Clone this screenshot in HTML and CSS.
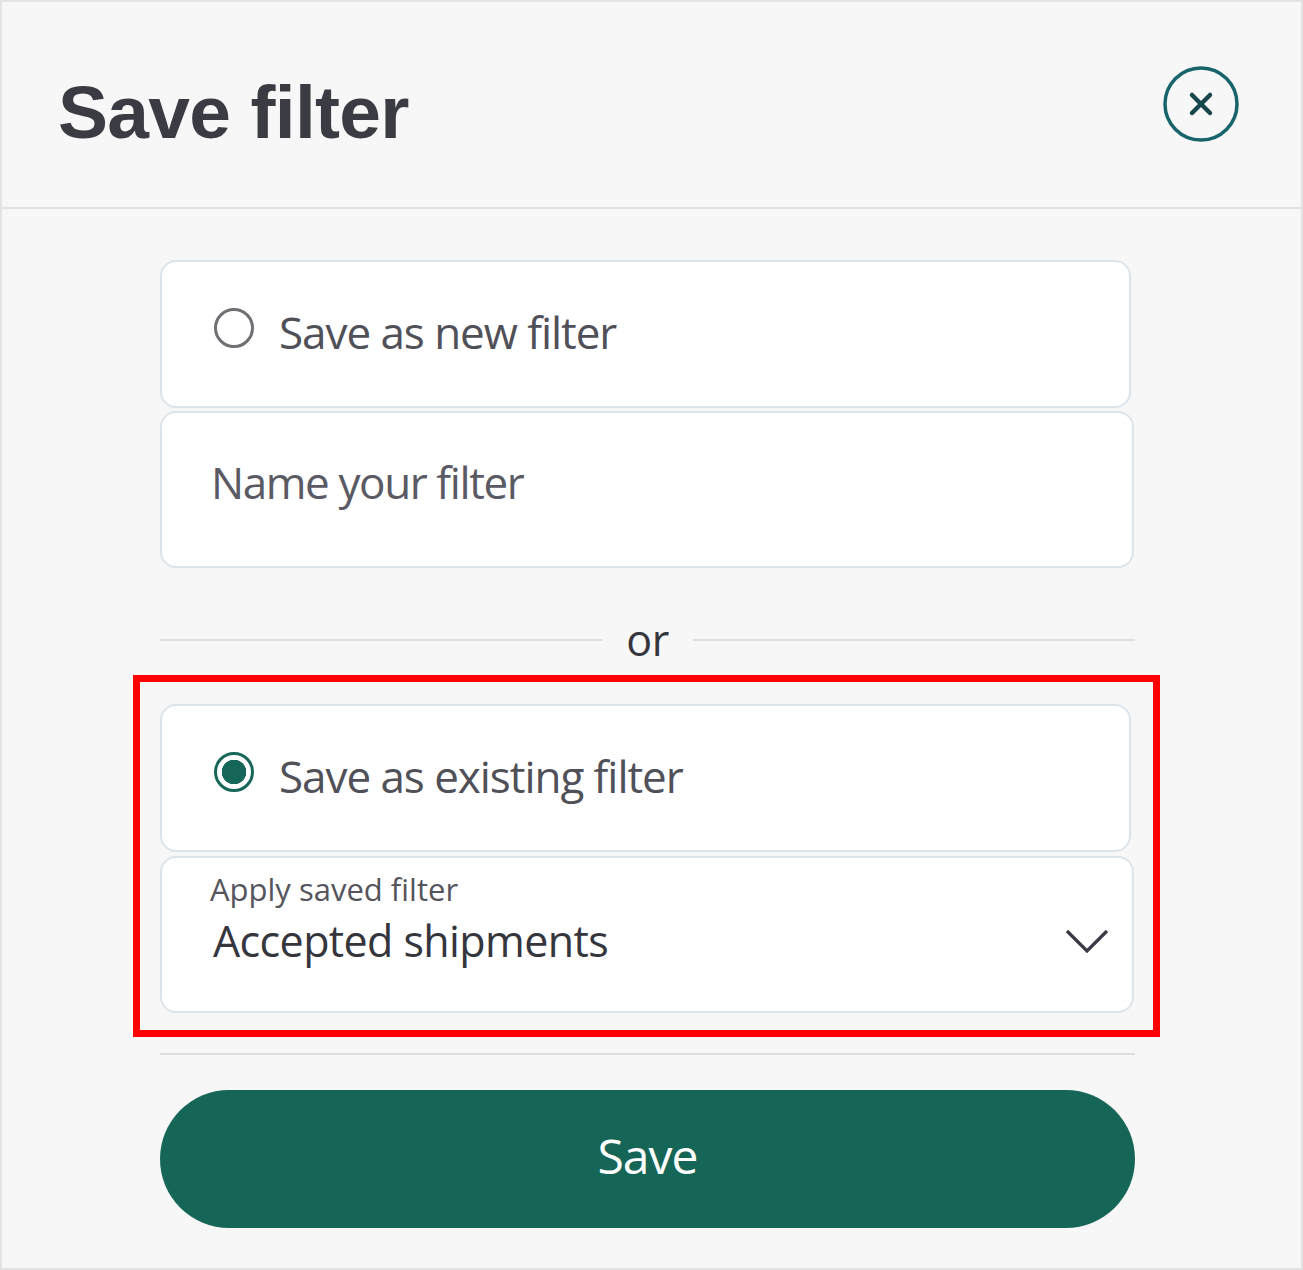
FILE: index.html
```html
<!DOCTYPE html>
<html>
<head>
<meta charset="utf-8">
<link rel="stylesheet" href="styles.css">
</head>
<body>
<div class="dialog">
  <header class="head">
    <h1 class="title">Save filter</h1>
    <button class="close" aria-label="Close">
      <svg width="80" height="80" viewBox="0 0 80 80">
        <circle cx="40" cy="40" r="36" fill="none" stroke="#17646a" stroke-width="3.5"/>
        <path d="M31 31 L49 49 M49 31 L31 49" stroke="#17464d" stroke-width="4.5" stroke-linecap="round"/>
      </svg>
    </button>
  </header>
  <main class="body">
    <div class="card card-a">
      <span class="radio"></span>
      <span class="opt">Save as new filter</span>
    </div>
    <div class="card card-b">
      <span class="placeholder">Name your filter</span>
    </div>
    <div class="or-row">
      <span class="line"></span>
      <span class="or">or</span>
      <span class="line"></span>
    </div>
    <div class="group">
      <div class="card card-a">
        <span class="radio checked"></span>
        <span class="opt">Save as existing filter</span>
      </div>
      <div class="card card-b select">
        <div class="sel-text">
          <span class="label">Apply saved filter</span>
          <span class="value">Accepted shipments</span>
        </div>
        <svg class="chev" width="46" height="28" viewBox="0 0 46 28">
          <path d="M3 4 L23 24 L43 4" fill="none" stroke="#3a3a44" stroke-width="3.2"/>
        </svg>
      </div>
      <div class="highlight"></div>
    </div>
    <div class="sep"></div>
    <button class="save">Save</button>
  </main>
</div>
</body>
</html>
```
FILE: styles.css
```css
html, body {
  margin: 0;
  padding: 0;
  background: #ffffff;
}
.dialog {
  width: 1299px;
  height: 1266px;
  border: 2px solid #e3e3e3;
  background: #f7f7f7;
  display: flex;
  flex-direction: column;
  font-family: "Open Sans", "Noto Sans", sans-serif;
}
.head {
  height: 205px;
  border-bottom: 2px solid #e2e2e2;
  display: flex;
  align-items: flex-start;
  justify-content: space-between;
  padding: 0 60px 0 56px;
}
.title {
  margin: 70px 0 0;
  font-family: "Liberation Sans", Arial, sans-serif;
  font-weight: bold;
  font-size: 75px;
  line-height: 80px;
  color: #3b3b43;
  letter-spacing: -0.7px;
}
.close {
  margin-top: 62px;
  padding: 0;
  border: 0;
  background: none;
  width: 80px;
  height: 80px;
}
.close svg { display: block; }
.body {
  display: flex;
  flex-direction: column;
  padding: 51px 0 0 158px;
}
.card {
  background: #ffffff;
  border: 2px solid #dce4eb;
  border-radius: 16px;
  box-sizing: border-box;
  display: flex;
  align-items: center;
}
.card-a {
  width: 971px;
  height: 148px;
  padding-left: 52px;
  gap: 25px;
}
.card-b {
  width: 974px;
  height: 157px;
  margin-top: 3px;
  padding-left: 49px;
}
.radio {
  width: 40px;
  height: 40px;
  box-sizing: border-box;
  border: 3px solid #707074;
  border-radius: 50%;
  flex: none;
  position: relative;
  top: -6px;
}
.radio.checked {
  border-color: #17665a;
  background: radial-gradient(circle, #17665a 0 12px, #ffffff 12.5px);
}
.opt {
  font-size: 44px;
  color: #505058;
  letter-spacing: -1.05px;
  position: relative;
  top: -2px;
}
.placeholder {
  font-size: 44px;
  color: #5a5a64;
  letter-spacing: -1.4px;
  position: relative;
  top: -8px;
}
.or-row {
  width: 975px;
  display: flex;
  align-items: center;
  gap: 24px;
  margin-top: 46px;
}
.line {
  flex: 1;
  height: 2px;
  background: #dedede;
}
.or {
  font-size: 43px;
  line-height: 52px;
  color: #35353d;
  letter-spacing: -0.5px;
}
.group {
  position: relative;
  margin-top: 38px;
}
.select {
  margin-top: 4px;
  justify-content: space-between;
  padding-right: 22px;
  padding-left: 48px;
}
.sel-text {
  display: flex;
  flex-direction: column;
  position: relative;
  top: -12px;
}
.label {
  font-size: 31px;
  line-height: 36px;
  color: #55555d;
  letter-spacing: 0;
  margin-top: -6px;
  margin-bottom: 6px;
}
.value {
  font-size: 43px;
  line-height: 56px;
  color: #35353d;
  letter-spacing: -0.6px;
  padding-left: 3px;
}
.chev {
  position: relative;
  top: 6px;
}
.highlight {
  position: absolute;
  left: -27px;
  top: -29px;
  width: 1027px;
  height: 362px;
  box-sizing: border-box;
  border: 7px solid #ff0000;
  pointer-events: none;
}
.sep {
  width: 975px;
  height: 2px;
  background: #dedede;
  margin-top: 40px;
}
.save {
  margin-top: 35px;
  width: 975px;
  height: 138px;
  border: 0;
  border-radius: 69px;
  background: #166658;
  color: #ffffff;
  font-family: "Open Sans", "Noto Sans", sans-serif;
  font-size: 48px;
  letter-spacing: -1px;
  padding: 0 0 8px;
}
```
